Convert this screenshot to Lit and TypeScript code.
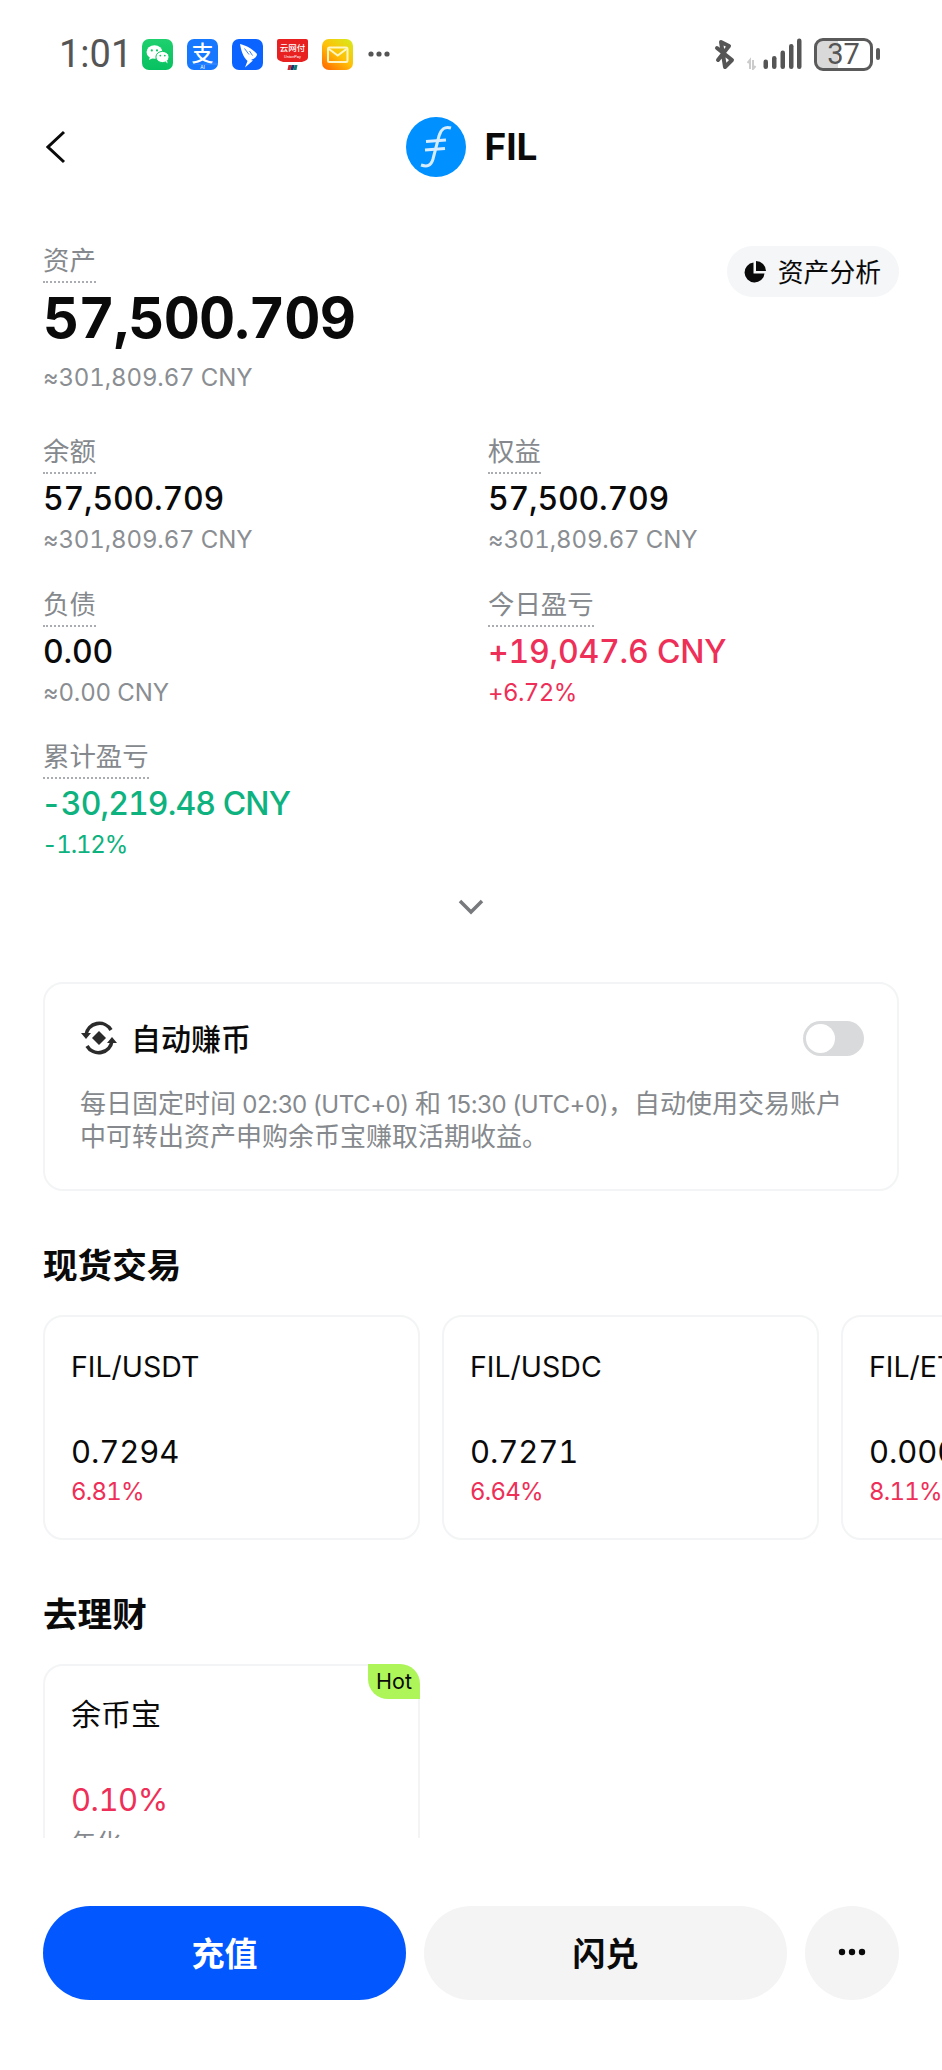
import { LitElement, html, css, svg } from "lit";
import { customElement } from "lit/decorators.js";

type Stat = { label: string; value: string; sub: string; tone?: "up" | "down" };

const STATS: Stat[] = [
  { label: "余额", value: "57,500.709", sub: "≈301,809.67 CNY" },
  { label: "权益", value: "57,500.709", sub: "≈301,809.67 CNY" },
  { label: "负债", value: "0.00", sub: "≈0.00 CNY" },
  { label: "今日盈亏", value: "+19,047.6 CNY", sub: "+6.72%", tone: "up" },
  { label: "累计盈亏", value: "-30,219.48 CNY", sub: "-1.12%", tone: "down" },
];

const MARKETS = [
  { pair: "FIL/USDT", price: "0.7294", pct: "6.81%" },
  { pair: "FIL/USDC", price: "0.7271", pct: "6.64%" },
  { pair: "FIL/ETH", price: "0.0003", pct: "8.11%" },
];

// notification icons in the status bar
const wechat = svg`
  <defs><linearGradient id="wx" x1="0" y1="0" x2="0" y2="1"><stop offset="0" stop-color="#1fd06e"/><stop offset="1" stop-color="#07c160"/></linearGradient></defs>
  <rect width="31" height="31" rx="7" fill="url(#wx)"/>
  <ellipse cx="12.5" cy="13" rx="8" ry="6.8" fill="#fff"/>
  <path d="M8 17.5l-1 3.5 4-2z" fill="#fff"/>
  <ellipse cx="20.5" cy="18" rx="6.6" ry="5.6" fill="#fff" stroke="#10c767" stroke-width="1"/>
  <path d="M23.5 22.5l2 2-.4-3.4z" fill="#fff"/>
  <circle cx="9.8" cy="11.4" r="1.1" fill="#10c767"/><circle cx="15" cy="11.4" r="1.1" fill="#10c767"/>
  <circle cx="18.3" cy="16.6" r=".9" fill="#10c767"/><circle cx="22.8" cy="16.6" r=".9" fill="#10c767"/>`;

const alipay = svg`
  <rect width="31" height="31" rx="7" fill="#1677ff"/>
  <path d="M0 26h31v-2c-4-1-8-1-12 .5z" fill="#3d8dff" opacity=".6"/>
  <text class="ali" x="15.5" y="21.5" text-anchor="middle">支</text>
  <text class="tiny" x="15.5" y="29.5" text-anchor="middle">AI</text>`;

const wing = svg`
  <rect width="31" height="31" rx="7" fill="#0b64ff"/>
  <path d="M8 5C13 6 21 10 25 15C25 18 22 20 19 21L21 21.5L13 28.5L15.5 22C11 18 9 11 8 5z" fill="#fff"/>
  <path d="M12.500 9.500L17 15.500M17.500 12L20.500 16.500" stroke="#0b64ff" stroke-width=".8" fill="none"/>`;

const unionpay = svg`
  <path d="M2 0h27a2 2 0 0 1 2 2v16c0 3-3 4-6 5H6c-3-1-6-2-6-5V2a2 2 0 0 1 2-2z" fill="#e8201f"/>
  <text class="yun" x="15.5" y="11.500" text-anchor="middle">云网付</text>
  <text class="micro" x="15.5" y="18.500" text-anchor="middle">UnionPay</text>
  <path d="M11.500 26h3l-1 5h-3z" fill="#d6242b"/><path d="M14.500 26h3l-1 5h-3z" fill="#15356e"/><path d="M17.500 26h3l-1 5h-3z" fill="#0f7a7a"/>`;

const mail = svg`
  <defs><linearGradient id="qm" x1=".9" y1="0" x2=".1" y2="1"><stop offset="0" stop-color="#d8e81c"/><stop offset=".5" stop-color="#ffc107"/><stop offset="1" stop-color="#ff6a00"/></linearGradient></defs>
  <rect width="31" height="31" rx="7" fill="url(#qm)"/>
  <rect x="6" y="8.500" width="19.500" height="14.500" rx="1.500" fill="none" stroke="#fff6c4" stroke-width="2"/>
  <path d="M7 10l8.700 6.500L24.500 10" fill="none" stroke="#fff6c4" stroke-width="2"/>`;

const APP_ICONS = [wechat, alipay, wing, unionpay, mail];

@customElement("app-root")
export class AppRoot extends LitElement {
  static styles = css`
    :host {
      display: block;
      width: 942px;
      height: 2070px;
      background: #fff;
      color: #0a0a0a;
      font-family: Inter, "Noto Sans CJK SC", sans-serif;
      font-variant-numeric: tabular-nums;
      overflow: hidden;
    }
    .page {
      display: flex;
      flex-direction: column;
      height: 2070px;
    }

    .status {
      flex: none;
      height: 117px;
      padding: 33px 62px 0 59px;
      box-sizing: border-box;
      display: flex;
      align-items: flex-start;
      justify-content: space-between;
      color: #555;
    }
    .status-left,
    .status-right {
      display: flex;
      align-items: center;
      height: 42px;
    }
    .time {
      font-family: Roboto, sans-serif;
      font-size: 38px;
      line-height: 42px;
      width: 83px;
    }
    .apps {
      display: flex;
      gap: 14px;
    }
    .apps svg {
      display: block;
      width: 31px;
      height: 31px;
      overflow: visible;
    }
    .ali {
      font: 500 22px "Noto Sans CJK SC", sans-serif;
      fill: #fff;
    }
    .tiny {
      font: 5px Roboto, sans-serif;
      fill: #fff;
    }
    .yun {
      font: 500 8.500px "Noto Sans CJK SC", sans-serif;
      fill: #fff;
    }
    .micro {
      font: 4px Roboto, sans-serif;
      fill: #fff;
    }
    .more-dots {
      margin-left: 15px;
      display: block;
    }
    .bt {
      display: block;
      margin-right: 11px;
    }
    .signal {
      display: block;
      margin-right: 12px;
    }
    .battery {
      box-sizing: border-box;
      width: 59px;
      height: 33px;
      border: 3px solid #5a5a5a;
      border-radius: 9px;
      background: linear-gradient(90deg, #d9d9d9 21px, transparent 21px);
      font-family: Roboto, sans-serif;
      font-size: 29px;
      line-height: 27px;
      text-align: center;
    }
    .nub {
      width: 4px;
      height: 12px;
      margin-left: 3px;
      border-radius: 2px;
      background: #5a5a5a;
    }

    .nav {
      flex: none;
      height: 60px;
      display: grid;
      grid-template-columns: 1fr auto 1fr;
      align-items: center;
    }
    .back {
      display: block;
      margin-left: 46px;
    }
    .coin {
      display: flex;
      align-items: center;
      gap: 18px;
      margin-left: 2px;
    }
    .coin svg {
      display: block;
    }
    .coin span {
      font-size: 37px;
      font-weight: 700;
      line-height: 60px;
    }

    .scroll {
      flex: none;
      height: 1661px;
      overflow: hidden;
    }
    .section {
      padding: 66px 43px 0;
    }
    .head {
      display: grid;
      grid-template-columns: 1fr auto;
    }
    .label {
      display: inline-block;
      font-size: 26.400px;
      line-height: 34px;
      padding-bottom: 4px;
      color: #85898d;
      border-bottom: 2px dotted #a9adb1;
    }
    .label-wrap {
      height: 40px;
    }
    .pill {
      grid-column: 2;
      grid-row: 1 / span 3;
      align-self: start;
      box-sizing: border-box;
      height: 51px;
      margin-top: 3px;
      padding: 0 18px 3px 17px;
      display: flex;
      align-items: center;
      gap: 12px;
      border-radius: 26px;
      background: #f4f6f7;
      font-size: 25.800px;
    }
    .pill svg {
      display: block;
      margin-top: 3px;
    }
    .big {
      font-size: 56px;
      font-weight: 700;
      line-height: 66px;
      margin-top: 2px;
      letter-spacing: -0.75px;
    }
    .sub {
      font-size: 24px;
      line-height: 34px;
      color: #8a8e92;
      letter-spacing: -0.13px;
    }
    .head .sub {
      margin-top: 10px;
    }
    .stats {
      display: grid;
      grid-template-columns: 445px 1fr;
      row-gap: 29.500px;
      margin-top: 39px;
    }
    .value {
      font-size: 32px;
      font-weight: 500;
      line-height: 40px;
      margin-top: 5px;
      letter-spacing: -0.2px;
    }
    .stat .sub {
      margin-top: 4px;
    }
    .up {
      color: #ee2f58;
    }
    .down {
      color: #0db27e;
    }
    .value.down {
      letter-spacing: -0.9px;
      margin-left: -2px;
    }
    .stat .sub.up {
      letter-spacing: -0.6px;
    }
    .stat .sub.down {
      letter-spacing: -1.2px;
      margin-left: -1px;
    }
    .expand {
      display: block;
      margin: 37px auto 0;
    }

    .auto {
      margin: 67px 43px 0;
      height: 209px;
      box-sizing: border-box;
      border: 2px solid #f3f4f5;
      border-radius: 20px;
      padding: 27px 33px 0 35px;
    }
    .auto-top {
      display: flex;
      align-items: center;
      height: 54px;
    }
    .auto-top svg {
      display: block;
      margin-right: 13px;
    }
    .auto-title {
      font-size: 30px;
      font-weight: 500;
      flex: 1;
      margin-top: -2px;
    }
    .toggle {
      box-sizing: border-box;
      width: 61px;
      height: 35px;
      padding: 3px;
      border-radius: 18px;
      background: #d9dadb;
    }
    .knob {
      width: 29px;
      height: 29px;
      border-radius: 50%;
      background: #fff;
    }
    .auto-desc {
      margin: 22px 0 0;
      font-size: 26px;
      line-height: 33px;
      color: #85898d;
      white-space: nowrap;
    }
    .latin {
      font-size: 24px;
      line-height: 1;
      letter-spacing: -0.45px;
      font-variant-numeric: normal;
    }

    .title {
      margin: 51px 43px 0;
      font-size: 34.600px;
      font-weight: 600;
      line-height: 46px;
    }
    .rail {
      display: flex;
      gap: 22px;
      padding-left: 43px;
      margin-top: 27px;
      overflow: hidden;
    }
    .card {
      position: relative;
      flex: none;
      width: 377px;
      box-sizing: border-box;
      border: 2px solid #f3f4f5;
      border-radius: 20px;
      padding: 30px 26px 0;
    }
    .market {
      height: 225px;
    }
    .pair {
      font-size: 28.500px;
      line-height: 40px;
    }
    .price {
      font-size: 31px;
      line-height: 44px;
      margin-top: 43px;
      letter-spacing: -0.1px;
    }
    .pct {
      font-size: 24px;
      line-height: 32px;
      margin-top: 2px;
      letter-spacing: -0.8px;
    }
    .earn {
      height: 300px;
    }
    .earn .pair {
      font-size: 30px;
      margin-top: -2px;
    }
    .rate {
      font-size: 31px;
      line-height: 44px;
      margin-top: 44px;
      letter-spacing: -0.5px;
    }
    .apr {
      font-size: 25px;
      line-height: 34px;
      color: #85898d;
      margin-top: 4px;
    }
    .hot {
      position: absolute;
      top: -2px;
      right: -2px;
      width: 52px;
      height: 35px;
      border-radius: 0 20px 0 20px;
      background: #aef55a;
      font-size: 21.500px;
      line-height: 35px;
      text-align: center;
    }

    .footer {
      flex: none;
      margin-top: 68px;
      padding: 0 43px;
      display: grid;
      grid-template-columns: 363px 363px 94px;
      gap: 18px;
    }
    .btn {
      box-sizing: border-box;
      height: 94px;
      padding-bottom: 2px;
      border-radius: 47px;
      background: #f4f4f4;
      display: flex;
      align-items: center;
      justify-content: center;
      font-size: 33px;
      font-weight: 600;
    }
    .primary {
      background: #0257ff;
      color: #fff;
    }
  `;

  private renderStat(s: Stat) {
    return html`
      <div class="stat">
        <div class="label-wrap"><span class="label">${s.label}</span></div>
        <div class="value ${s.tone ?? ""}">${s.value}</div>
        <div class="sub ${s.tone ?? ""}">${s.sub}</div>
      </div>
    `;
  }

  private renderStatus() {
    return html`
      <div class="status">
        <div class="status-left">
          <div class="time">1:01</div>
          <div class="apps">
            ${APP_ICONS.map((icon) => html`<svg viewBox="0 0 31 31">${icon}</svg>`)}
          </div>
          <svg class="more-dots" width="22" height="6" viewBox="0 0 22 6" fill="#555">
            <circle cx="3" cy="3" r="2.600"/><circle cx="11" cy="3" r="2.600"/><circle cx="19" cy="3" r="2.600"/>
          </svg>
        </div>
        <div class="status-right">
          <svg class="bt" width="22" height="32" viewBox="0 0 22 32" fill="none" stroke="#555" stroke-width="4" stroke-linejoin="round" stroke-linecap="round">
            <path d="M3 10l15 12-7 7-4-25 8 4L4 22"/>
          </svg>
          <svg class="signal" width="55" height="32" viewBox="0 0 55 32">
            <path d="M3 31V22l-2.500 3M6 22v9l2.500-3" fill="none" stroke="#ccc" stroke-width="2"/>
            <rect x="16.500" y="21.500" width="4.500" height="9.500" rx="2.200" fill="#555"/>
            <rect x="25" y="18" width="4.500" height="13" rx="2.200" fill="#555"/>
            <rect x="33.500" y="12.500" width="4.500" height="18.500" rx="2.200" fill="#555"/>
            <rect x="42" y="6" width="4.500" height="25" rx="2.200" fill="#555"/>
            <rect x="50" y=".5" width="4.500" height="30.500" rx="2.200" fill="#555"/>
          </svg>
          <div class="battery">37</div>
          <div class="nub"></div>
        </div>
      </div>
    `;
  }

  render() {
    return html`
      <div class="page">
        ${this.renderStatus()}
        <div class="nav">
          <svg class="back" width="20" height="34" viewBox="0 0 20 34" fill="none" stroke="#0a0a0a" stroke-width="3">
            <path d="M18 2L2 17l16 15"/>
          </svg>
          <div class="coin">
            <svg width="60" height="60" viewBox="0 0 60 60">
              <circle cx="30" cy="30" r="30" fill="#0090ff"/>
              <path d="M45 11c-6-2-10 1-12 8l-6 23c-2 7-6 8-12 6" fill="none" stroke="#d6ecff" stroke-width="3"/>
              <path d="M20 24.500l20-1.500M19 33l20-1.500" stroke="#d6ecff" stroke-width="3"/>
            </svg>
            <span>FIL</span>
          </div>
          <div></div>
        </div>

        <div class="scroll">
          <div class="section">
            <div class="head">
              <div class="label-wrap"><span class="label">资产</span></div>
              <div class="pill">
                <svg width="22" height="22" viewBox="0 0 22 22" fill="#0a0a0a">
                  <path d="M9.500 1.500v11h11A10 10 0 1 1 9.500 1.500z"/>
                  <path d="M12 0a10 10 0 0 1 10 10H12z"/>
                </svg>
                资产分析
              </div>
              <div class="big">57,500.709</div>
              <div class="sub">≈301,809.67 CNY</div>
            </div>
            <div class="stats">${STATS.map((s) => this.renderStat(s))}</div>
            <svg class="expand" width="26" height="16" viewBox="0 0 26 16" fill="none" stroke="#77797c" stroke-width="3.500">
              <path d="M2 2l11 11L24 2"/>
            </svg>
          </div>

          <div class="auto">
            <div class="auto-top">
              <svg width="38" height="38" viewBox="0 0 38 38" fill="none" stroke="#2b2b2b" stroke-width="3.600">
                <path d="M6 16a13.500 13.500 0 0 1 25-5"/>
                <path d="M32 22a13.500 13.500 0 0 1-25 5"/>
                <path d="M1 14h10l-5 6zM37 24H27l5-6z" fill="#2b2b2b" stroke="none"/>
                <path d="M19 12l7 7-7 7-7-7z" fill="#2b2b2b" stroke="none"/>
              </svg>
              <div class="auto-title">自动赚币</div>
              <div class="toggle"><div class="knob"></div></div>
            </div>
            <p class="auto-desc">每日固定时间<span class="latin"> 02:30 (UTC+0) </span>和<span class="latin"> 15:30 (UTC+0)</span>，自动使用交易账户<br />中可转出资产申购余币宝赚取活期收益。</p>
          </div>

          <div class="title">现货交易</div>
          <div class="rail">
            ${MARKETS.map(
              (m) => html`
                <div class="card market">
                  <div class="pair">${m.pair}</div>
                  <div class="price">${m.price}</div>
                  <div class="pct up">${m.pct}</div>
                </div>
              `
            )}
          </div>

          <div class="title">去理财</div>
          <div class="rail">
            <div class="card earn">
              <div class="hot">Hot</div>
              <div class="pair">余币宝</div>
              <div class="rate up">0.10%</div>
              <div class="apr">年化</div>
            </div>
          </div>
        </div>

        <div class="footer">
          <div class="btn primary">充值</div>
          <div class="btn">闪兑</div>
          <div class="btn">
            <svg width="28" height="8" viewBox="0 0 28 8" fill="#0a0a0a">
              <circle cx="4" cy="4" r="3.200"/><circle cx="14" cy="4" r="3.200"/><circle cx="24" cy="4" r="3.200"/>
            </svg>
          </div>
        </div>
      </div>
    `;
  }
}
